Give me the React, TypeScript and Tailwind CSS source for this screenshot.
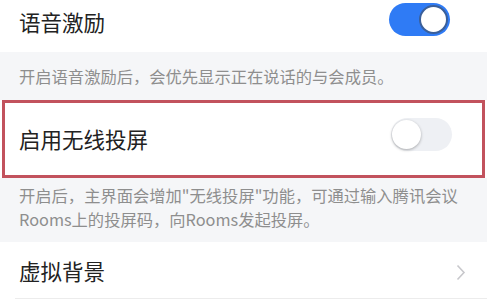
import React from "react";

const font = { fontFamily: '"Noto Sans CJK SC", "Noto Sans", sans-serif' };

const Toggle = ({ on }: { on: boolean }) => (
  <div
    className={`relative w-[61px] h-[33px] rounded-full ${on ? "bg-[#2f7bf5]" : "bg-[#eef0f4]"}`}
  >
    <div
      className={`absolute top-[2px] w-[29px] h-[29px] rounded-full bg-white ${
        on ? "right-[2px] border-2 border-[#3a5f9a]" : "left-[1px] shadow-[0_1px_3px_rgba(0,0,0,0.3)]"
      }`}
    />
  </div>
);

export default function App() {
  return (
    <div className="w-[487px] h-[306px] bg-white overflow-hidden text-[#222]" style={font}>
      <div className="h-[52px] flex items-start justify-between pl-[19px] pr-[37px]">
        <span className="text-[21.5px] leading-[30px] pt-[7px]">语音激励</span>
        <div className="pt-[3px]">
          <Toggle on />
        </div>
      </div>
      <div className="h-[48px] bg-[#f5f6f8] pl-[19px] pt-[13px] text-[16.3px] leading-[22px] text-[#8e8e8e]">
        开启语音激励后，会优先显示正在说话的与会成员。
      </div>
      <div className="h-[78px] mx-[2px] border-[3px] border-[#c2525d] bg-white flex items-start justify-between pl-[14px] pr-[30px]">
        <span className="text-[21.5px] leading-[30px] pt-[21px]">启用无线投屏</span>
        <div className="pt-[15px]">
          <Toggle on={false} />
        </div>
      </div>
      <div className="h-[64px] bg-[#f5f6f8] pl-[19px] pr-[6px] pt-[5px] text-[16.3px] leading-[24px] text-[#8e8e8e]">
        <div className="whitespace-nowrap">开启后，主界面会增加"无线投屏"功能，可通过输入腾讯会议</div>
        <div>Rooms上的投屏码，向Rooms发起投屏。</div>
      </div>
      <div className="h-[56px] flex items-start justify-between pl-[19px] pr-[21px]">
        <span className="text-[21.5px] leading-[30px] pt-[14px]">虚拟背景</span>
        <svg className="mt-[22px]" width="10" height="17" viewBox="0 0 10 17" fill="none">
          <path d="M1.5 1.5 L8 8.5 L1.5 15.5" stroke="#c8c8cc" strokeWidth="1.6" />
        </svg>
      </div>
      <div className="ml-[15px] h-px bg-[#ececec]" />
    </div>
  );
}
